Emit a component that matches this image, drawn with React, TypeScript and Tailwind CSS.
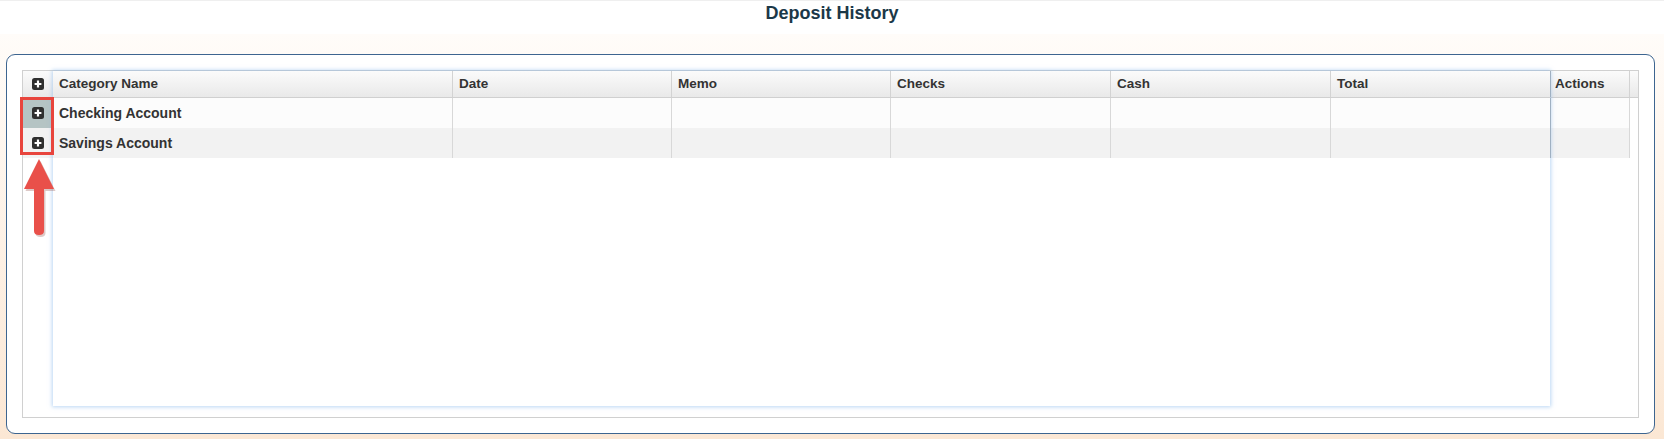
import React from "react";

type Column = { title: string; width: string };

const columns: Column[] = [
  { title: "Category Name", width: "w-[399px]" },
  { title: "Date", width: "w-[219px]" },
  { title: "Memo", width: "w-[219px]" },
  { title: "Checks", width: "w-[220px]" },
  { title: "Cash", width: "w-[220px]" },
  { title: "Total", width: "w-[220px]" },
];

const rows = [
  { name: "Checking Account", bg: "bg-[#fcfcfc]", h: "h-[30px]" },
  { name: "Savings Account", bg: "bg-[#f2f2f2]", h: "h-[30px]" },
];

const PlusSquare = () => (
  <svg width="12" height="12" viewBox="0 0 12 12">
    <rect x="0" y="0" width="12" height="12" rx="2.5" fill="#2f2f2f" />
    <path d="M6 2.6v6.8M2.6 6h6.8" stroke="#fff" strokeWidth="2.2" />
  </svg>
);

const headerBg = "bg-linear-to-b from-[#fbfbfb] to-[#e9e9e9]";

const App = () => {
  return (
    <div
      className="w-[1664px] h-[439px] overflow-hidden bg-white text-[#333]"
      style={{ fontFamily: '"Liberation Sans", Arial, sans-serif' }}
    >
      <div className="h-[34px] border-t border-[#efefef] flex justify-center">
        <h1 className="text-[18px] font-bold text-[#1b3848] leading-[25px]">
          Deposit History
        </h1>
      </div>

      <div className="h-[405px] bg-linear-to-b from-[#fffcf9] to-[#fbe7d4] pt-[20px] pl-[6px]">
        <div className="w-[1649px] h-[380px] rounded-[9px] border border-[#3d6590] bg-white p-[15px]">
          <div className="relative h-[348px] border border-[#d0d0d0] flex font-bold">
            {/* locked expand column */}
            <div className="w-[30px] flex flex-col">
              <div className={`h-[27px] border-b border-[#d0d0d0] flex items-center justify-center ${headerBg}`}>
                <PlusSquare />
              </div>
              {rows.map((r, i) => (
                <div
                  key={r.name}
                  className={`${r.h} flex items-center justify-center ${i === 0 ? "bg-[#b5c4c4]" : r.bg}`}
                >
                  <PlusSquare />
                </div>
              ))}
            </div>

            {/* scrollable content */}
            <div className="relative z-10 w-[1497px] h-[335px] bg-white shadow-[0_0_4px_1px_rgba(130,180,235,0.55)]">
              <div className={`flex h-[27px] border-b border-[#d0d0d0] text-[13.5px] ${headerBg}`}>
                {columns.map((c, i) => (
                  <div
                    key={c.title}
                    className={`${c.width} shrink-0 px-[6px] flex items-center ${i > 0 ? "border-l border-[#d3d3d3]" : ""}`}
                  >
                    {c.title}
                  </div>
                ))}
              </div>
              {rows.map((r) => (
                <div key={r.name} className={`flex ${r.h} ${r.bg} text-[14px]`}>
                  {columns.map((c, i) => (
                    <div
                      key={c.title}
                      className={`${c.width} shrink-0 px-[6px] flex items-center ${i > 0 ? "border-l border-[#d8d8d8]" : ""}`}
                    >
                      {i === 0 ? r.name : ""}
                    </div>
                  ))}
                </div>
              ))}
            </div>

            {/* locked actions column */}
            <div className="flex-1 flex flex-col">
              <div className={`flex h-[27px] border-b border-[#d0d0d0] text-[13.5px] ${headerBg}`}>
                <div className="w-[79px] border-l border-[#aeaeae] px-[4px] flex items-center">
                  Actions
                </div>
                <div className="flex-1 border-l border-[#d3d3d3]" />
              </div>
              {rows.map((r) => (
                <div key={r.name} className={`flex ${r.h} ${r.bg}`}>
                  <div className="w-[79px] border-l border-[#aeaeae]" />
                  <div className="flex-1 border-l border-[#d8d8d8] bg-white" />
                </div>
              ))}
            </div>

            {/* annotation */}
            <div className="absolute left-[-3px] top-[26px] w-[34px] h-[58px] border-[3px] border-[#e8453d] z-20" />
            <svg
              className="absolute left-[-1px] top-[86px] z-20"
              width="34"
              height="80"
              viewBox="0 0 34 80"
            >
              <path
                d="M17 2 L32 32 L22 32 L22 74 Q22 78 17 78 Q12 78 12 74 L12 32 L2 32 Z"
                fill="rgba(120,40,30,0.25)"
                transform="translate(1.5 2)"
              />
              <path
                d="M17 2 L32 32 L22 32 L22 74 Q22 78 17 78 Q12 78 12 74 L12 32 L2 32 Z"
                fill="#e9504a"
              />
            </svg>
          </div>
        </div>
      </div>
    </div>
  );
};

export default App;
